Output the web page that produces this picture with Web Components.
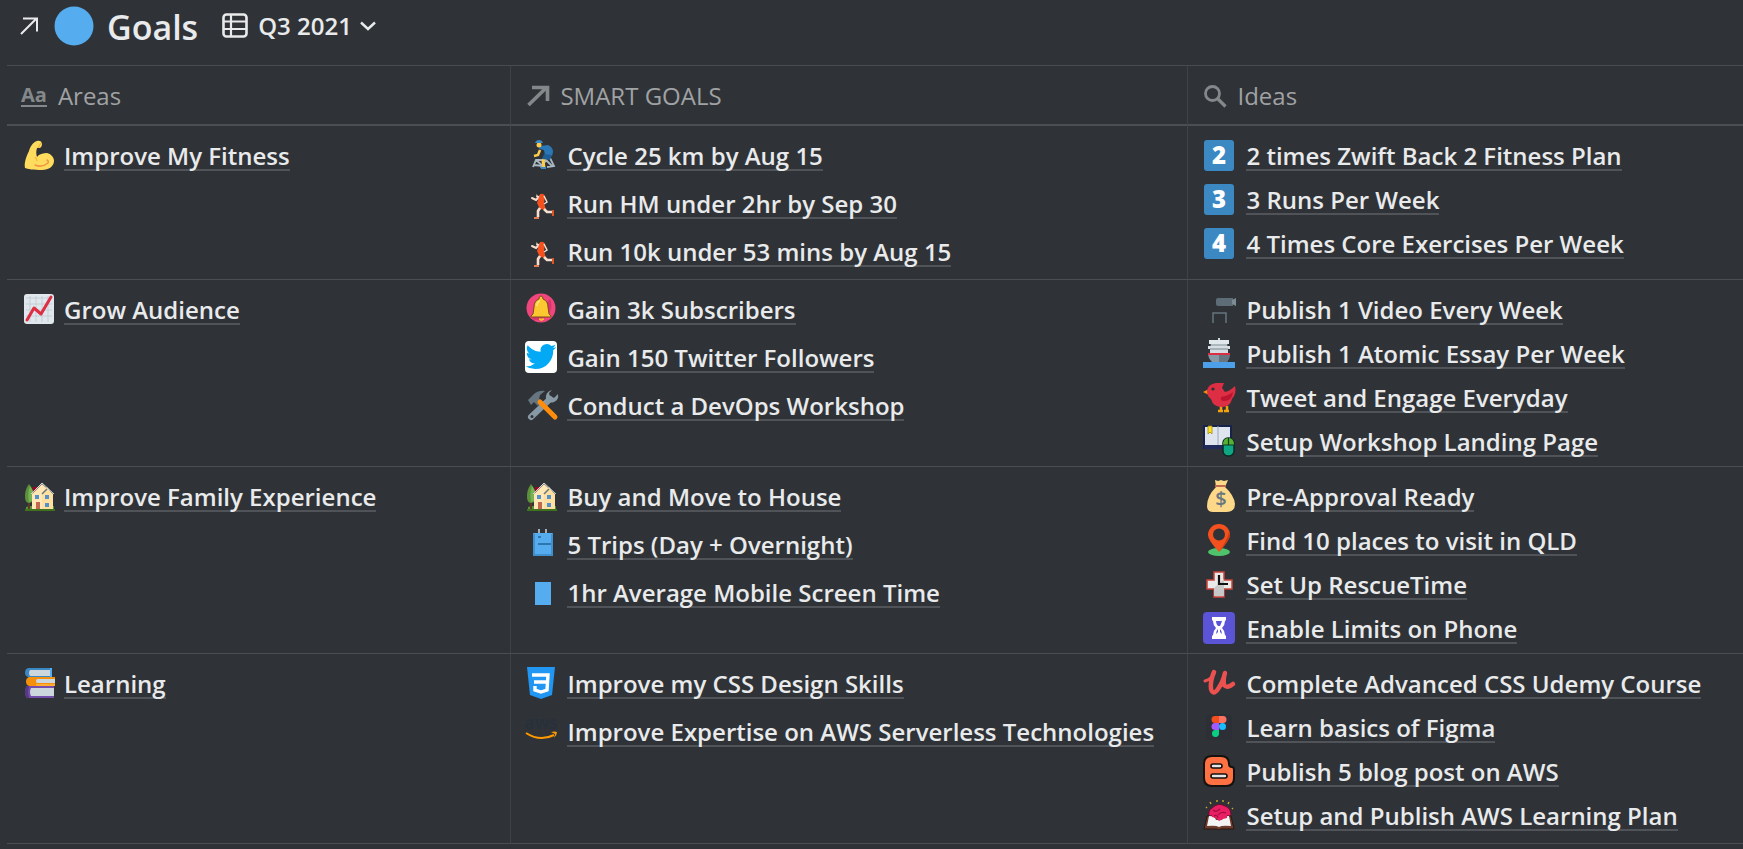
<!DOCTYPE html>
<html lang="en">
<head>
<meta charset="utf-8">
<title>Goals – Q3 2021</title>
<style>
  html, body { margin: 0; min-height: 100%; background: #2f3337; }
  body { font-family: "Open Sans", "Noto Sans", sans-serif; font-size: 24px; color: #e9eaeb; overflow-x: hidden; }
</style>
</head>
<body>
<goals-page></goals-page>

<script>
const HOUSE = `
  <path d="M2 29h30v2H2z" fill="#3e721d"/><path d="M3 27q6-2 12 0t16-1v3H3z" fill="#5c913b"/>
  <rect x="5" y="20" width="2" height="9" fill="#5b3a22"/>
  <path d="M6 4c-3 4-4 8-4 12s1 7 4 7 5-3 5-7-2-8-5-12z" fill="#5c913b"/><path d="M7 6c-2 5-2 10-1 16 3 0 5-3 5-6 0-4-2-7-4-10z" fill="#77b255"/>
  <rect x="10" y="7" width="4" height="6" fill="#a0041e"/>
  <path d="M9 14l10-10 11 10v15H9z" fill="#ffe8b6"/><path d="M19 12l5-5 6 8v14H19z" fill="#ffe0a0"/>
  <path d="M8 14L19 3l12 11" fill="none" stroke="#ccd6dd" stroke-width="1"/><path d="M19 14l5-5" stroke="#66757f" stroke-width="1.5"/>
  <rect x="12" y="15" width="4" height="4" fill="#5592c9"/><rect x="22" y="15" width="4" height="4" fill="#5592c9"/><rect x="22" y="23" width="4" height="4" fill="#5592c9"/><rect x="13" y="22" width="4" height="7" fill="#c1694f"/>`;
const RUNNER = `
  <g transform="translate(0 2)"><path d="M12 4l4 1-1 5-4-2z" fill="#f5dccb"/><path d="M11 4l5-1 1 3-4 1z" fill="#292f33"/>
  <path d="M14 8l-3 3-4-2" fill="none" stroke="#f7dece" stroke-width="2" stroke-linecap="round"/>
  <path d="M15 5q4-1 5 2l-1 7 2 7-6-1-3-6z" fill="#f4511e"/><path d="M19 7l3 6-3 2" fill="none" stroke="#f7dece" stroke-width="1.500"/>
  <path d="M15 19l-2 3v6" fill="none" stroke="#f7dece" stroke-width="2.600"/><path d="M19 20l3 3h5" fill="none" stroke="#f7dece" stroke-width="2.600"/>
  <path d="M9 29h5" stroke="#e57b52" stroke-width="2"/><path d="M28 21v6" stroke="#dd551f" stroke-width="2"/></g>`;
const keycap = n => `
  <rect x="1" y="1" width="30" height="31" rx="3" fill="#3b88c3"/>
  <text x="16" y="25" text-anchor="middle" font-family="Open Sans" font-size="24" font-weight="800" fill="#fff">${n}</text>`;

const ICONS = {
  arm: `<path d="M14 2c2-1 5 0 5 3 0 2-1 4-3 4h-2c-1 3-1 6 0 9 2-3 6-4 10-4 4 1 7 4 7 8 0 5-5 9-12 9-8 0-15-1-17-2-1-5 1-11 4-17 1-4 4-9 8-10z" fill="#ffdc5d"/><path d="M15 9l3-5M12 18q2 2 2 4" stroke="#f2ab3a" stroke-width="1" fill="none"/><path d="M12 26q7 3 13-2 1-2-1-3" fill="none" stroke="#ef9645" stroke-width="1.5" stroke-linecap="round"/>`,
  chart: `<rect x="1" y="1" width="30" height="30" rx="3" fill="#e1e8ed"/><path d="M3 5h26M3 11h26M3 17h26M3 23h26M7 3v26M13 3v26M19 3v26M25 3v26" stroke="#c3ced6" stroke-width="1"/><path d="M4 27l7-12 7 6L28 4" fill="none" stroke="#dd2e44" stroke-width="3" stroke-linecap="round" stroke-linejoin="round"/>`,
  house: HOUSE,
  books: `<path d="M5 1h24v9H5q-3-1-3-4.500T5 1z" fill="#3b88c3"/><path d="M7 3h20v6H7q-2-3 0-6z" fill="#ccd6dd"/><path d="M27 1h2v9h-2z" fill="#55acee"/><path d="M6 10h26v9H6q-3-1-3-4.500T6 10z" fill="#f4900c"/><path d="M14 12h18v4H14q-2-2 0-4z" fill="#ccd6dd"/><path d="M13 17h19v2H13z" fill="#ffac33"/><path d="M5 19h26v12H5q-3-1-3-6t3-6z" fill="#744eaa"/><path d="M8 21h23v8H8q-2-4 0-8z" fill="#ccd6dd"/><path d="M5 19q-3 6 0 12" fill="none" stroke="#553986" stroke-width="3"/>`,
  cyclist: `<path d="M8 28l3-7h10l6 6M11 21l7 6-9-1M21 21l-5 8M25 19l4 8-7 1" fill="none" stroke="#aab8c2" stroke-width="1.800"/><path d="M15 7l8-1q5 2 5 7l-1 4-7-1-1-5-5-1z" fill="#2a77b8"/><path d="M15 11l-2 5-4 1" fill="none" stroke="#ffcc4d" stroke-width="2.500"/><path d="M21 17l-3 5 1 6" fill="none" stroke="#ffcc4d" stroke-width="3"/><path d="M19 15l8 1-2 5-8-1z" fill="#1f5f95"/><path d="M16 29h5" stroke="#3b88c3" stroke-width="2"/><circle cx="14" cy="6" r="2.500" fill="#ffcc4d"/><path d="M10 4q1-3 4-3t4 3z" fill="#3b88c3"/>`,
  runner: RUNNER,
  bell: `<circle cx="16" cy="15" r="14.500" fill="#f0457d"/><path d="M25 6a14.500 14.500 0 0 1-18 20" fill="#d93370"/><path d="M14 6q0-3 2-3t2 3q5 2 5 8l1 7 2 2v1H6v-1l2-2 1-7q0-6 5-8z" fill="#fbc82f" stroke="#7c4a1b" stroke-width="1"/><path d="M14 26q2 3 5 0z" fill="#d9a11c" stroke="#fbc82f"/><path d="M12 13q0-4 3-5" stroke="#ffe58a" stroke-width="1.500" fill="none"/>`,
  twitter: `<rect width="32" height="32" rx="4" fill="#fff"/><path transform="translate(.6 .2) scale(1.28)" fill="#03a9f4" d="M23.950 4.570a10 10 0 0 1-2.820.780 4.960 4.960 0 0 0 2.160-2.730c-.950.560-2 .960-3.130 1.190a4.920 4.920 0 0 0-8.380 4.480C7.690 8.090 4.070 6.130 1.640 3.160a4.820 4.820 0 0 0-.670 2.480c0 1.710.870 3.210 2.190 4.100a4.900 4.900 0 0 1-2.230-.620v.060a4.920 4.920 0 0 0 3.950 4.830 5 5 0 0 1-2.210.080 4.940 4.940 0 0 0 4.600 3.420A9.870 9.870 0 0 1 0 19.540a13.990 13.990 0 0 0 7.560 2.210c9.050 0 14-7.500 14-13.980 0-.210 0-.420-.020-.630a9.940 9.940 0 0 0 2.410-2.570z"/>`,
  tools: `<g transform="translate(1 1)"><path d="M5 27L24 9" stroke="#8899a6" stroke-width="6" stroke-linecap="round"/><circle cx="6" cy="26.500" r="1.500" fill="#2f3337"/><path d="M26 0q-7 2-6 9 3 5 8 3 5-2 4-8l-4 4-4-2-1-3z" fill="#8899a6"/><path d="M2 10l5-5q5-5 12-4l-5 4-1 4 3 3-4 4-4-4-3 3z" fill="#66757f"/><path d="M14 12L29 27" stroke="#ff8c0a" stroke-width="5" stroke-linecap="round"/></g>`,
  backpack: `<path d="M14 1v7M21 1v7" stroke="#ccd6dd" stroke-width="1.500"/><rect x="8" y="5" width="20" height="23" rx="1" fill="#55acee"/><path d="M13 9h3M13 16h13" stroke="#226699" stroke-width="1.500"/><path d="M9 6v21h18V6" fill="none" stroke="#3b88c3" stroke-width="1.500"/>`,
  phone: `<rect x="10" y="6" width="16" height="23" fill="#55acee"/>`,
  two: keycap(2), three: keycap(3), four: keycap(4),
  camera: `<g transform="translate(0 3)"><path d="M13 4q0-2 2-2h15v8H15q-2 0-2-2z" fill="#5d6c76"/><path d="M29 4l4-2v8l-4-2z" fill="#7d8b95"/><path d="M10 27V17h13v10" fill="none" stroke="#66757f" stroke-width="1.500"/></g>`,
  ship: `<path d="M16 1v6M10 5h12" stroke="#ccd6dd" stroke-width="2"/><path d="M6 3h20v4H6zM8 7h16v4H8z" fill="#e1e8ed"/><path d="M5 9h22v3H5zM7 12h18v4H7z" fill="#d5dde3"/><path d="M7 8h18M7 12h18" stroke="#77868f" stroke-width="1"/><path d="M5 16h22q0 5-3 9H9q-4-4-4-9z" fill="#8899a6"/><path d="M16 16h11q0 5-3 9h-8z" fill="#66757f"/><path d="M5 16h22v2H5z" fill="#dd2e44"/><path d="M0 25h32v6H0z" fill="#4c9fe8"/>`,
  bird: `<g transform="translate(0 1)"><path d="M6 7L0 10l6 3z" fill="#f4900c"/><path d="M18 24v4m-3 1h5M24 24v4m-3 1h5" stroke="#f4a30c" stroke-width="2.500"/><path d="M4 9Q5 2 13 1h8l-2 5 3 4q5-1 10-6 2 7-3 13-2 8-10 8-9 0-11-8-4-3-4-8z" fill="#dd2e44"/><path d="M18 15q7-1 12-5-1 9-9 9-4 0-3-4z" fill="#bd1430"/><circle cx="10" cy="7" r="1.600" fill="#292f33"/></g>`,
  landing: `<path d="M1 1h27v22H1z" fill="#dfe5ef" stroke="#17234b" stroke-width="2"/><path d="M15 1v22" stroke="#9aa4bd" stroke-width="1"/><path d="M1 20h19v4H1z" fill="#202a5c"/><path d="M5 1h4v8l-2-2-2 2z" fill="#ffe02b" stroke="#a58b00" stroke-width=".8"/><rect x="20" y="13" width="11" height="18" rx="5" fill="#0fa683" stroke="#0c2a24" stroke-width="1.500"/><path d="M20 20q0-7 5.500-7t5.500 7z" fill="#57b030"/><path d="M20 20h11M25.500 13v7" stroke="#0c3a24" stroke-width="1.200"/>`,
  money: `<path d="M12 0l3 1 3-1 3 1 4-1-3 7q9 8 10 17 0 8-9 8H10q-6 0-6-6 0-10 9-19z" fill="#fdd888"/><path d="M12 6h11" stroke="#bf6952" stroke-width="2"/><text x="18" y="26" text-anchor="middle" font-family="Open Sans" font-size="20" font-weight="600" fill="#67757f">$</text>`,
  pin: `<ellipse cx="16" cy="28" rx="11" ry="4" fill="#4fc36b"/><path d="M16 28Q5 16 5 11a11 11 0 0 1 22 0Q27 16 16 28z" fill="#f4511e"/><path d="M16 28Q25 15 26 8l1 3q-1 6-11 17z" fill="#c83a13"/><circle cx="16" cy="10.500" r="6" fill="#2f3337"/>`,
  rescue: `<path d="M11 4h10v8h8v9h-8v8H11v-8H4v-9h7z" fill="#e9e9e9" stroke="#c9443d" stroke-width="1.500"/><path d="M11 20l10-9v17H11z" fill="#c8c8c8"/><path d="M16 7v9h9" fill="none" stroke="#111" stroke-width="2.200"/>`,
  hourglass: `<rect width="32" height="32" rx="4" fill="#5b54d6"/><path d="M9 5h14v3l-1 1q0 4-3 7 3 3 3 7l1 1v3H9v-3l1-1q0-4 3-7-3-3-3-7L9 8z" fill="#fff"/><path d="M13 9h6q-1 3-2 5v3q2 2 2 5h-6q0-3 2-5v-3q-2-2-2-5z" fill="#5b54d6"/><path d="M15 14h2v6l2 2h-6l2-2z" fill="#fff"/>`,
  css: `<path d="M2 0h28l-3 28-11 4-11-4z" fill="#2196f3"/><path d="M7 8h16l-1 15-6 2-6-2v-4M9 15h13" fill="none" stroke="#fff" stroke-width="3.400"/>`,
  aws: `<text x="16" y="14" text-anchor="middle" font-family="Open Sans" font-size="17" font-weight="700" fill="#28303b">aws</text><path d="M1 18q14 9 28 2" fill="none" stroke="#f90" stroke-width="2"/><path d="M26 17q4-1 6 0 0 3-3 6 1-3 1-4z" fill="#f90"/>`,
  udemy: `<path d="M2 14q7-2 9-8" fill="none" stroke="#eb524f" stroke-width="3" stroke-linecap="round"/><path d="M11 5Q7 14 8 22q2 7 7 0Q20 15 22 6q-2 7-1 12 3 4 9-1" fill="none" stroke="#eb524f" stroke-width="4.500" stroke-linecap="round" stroke-linejoin="round"/>`,
  figma: `<rect x="3" y="3" width="26" height="26" rx="4" fill="#2c2f35"/><path d="M12 5h4v7h-4a3.500 3.500 0 0 1 0-7z" fill="#f24e1e"/><path d="M16 5h4a3.500 3.500 0 0 1 0 7h-4z" fill="#ff7262"/><path d="M16 12h-4a3.500 3.500 0 0 0 0 7h4z" fill="#a259ff"/><circle cx="19.500" cy="15.500" r="3.500" fill="#1abcfe"/><path d="M12 19h4v3.500a3.500 3.500 0 1 1-4-3.500z" fill="#0acf83"/>`,
  blogger: `<path d="M9 1h9q8 0 8 8 0 3 3 3 2 0 2 3v8q0 8-8 8H9q-8 0-8-8V9q0-8 8-8z" fill="#ff7143" stroke="#15110f" stroke-width="2"/><rect x="8" y="9" width="11" height="4" rx="2" fill="#e6e6e6" stroke="#15110f" stroke-width="1.600"/><rect x="8" y="19" width="16" height="4" rx="2" fill="#e6e6e6" stroke="#15110f" stroke-width="1.600"/>`,
  brain: `<path d="M4 9l-1-1M8 5L7 3M14 3V1M20 3V1M25 5l1-2M29 10l1-1" stroke="#c8a92e" stroke-width="1.400"/><path d="M6 17q-1-6 3-8 6-6 13-2 6 2 6 9l-3 6H9z" fill="#e91e63" stroke="#6e0c30" stroke-width="1"/><path d="M4 17l-3 13h13l2 1 2-1h13l-3-13z" fill="#6d3c2c" stroke="#2b1712" stroke-width="1"/><path d="M6 17q6 0 7 4h3v7q-3-2-12-1zM26 17q-6 0-7 4h-3v7q3-2 12-1z" fill="#f4f4f4"/><path d="M9 14h15v5l-4 1-4 2-3-3-4-1z" fill="#e91e63"/><path d="M10 11q3 3 7-1m-2 6q3-4 8-2m-12 3q3-2 4 2" fill="none" stroke="#a30f43" stroke-width="1.200"/>`,
  table: `<rect x="1.500" y="1.500" width="23" height="22" rx="3" fill="none" stroke="currentColor" stroke-width="2.600"/><path d="M9 2v21M2 8.500h22M2 16h22" stroke="currentColor" stroke-width="2.200"/>`,
  chevron: `<path d="M1 1.500l7 6.500 7-6.500" fill="none" stroke="currentColor" stroke-width="2.400"/>`,
  open: `<path d="M1 17L16 2M3 1.500h14v13" fill="none" stroke="currentColor" stroke-width="2"/>`,
  relation: `<path d="M1.500 20L19 3M5 2.500h15.500V16" fill="none" stroke="currentColor" stroke-width="3.600"/>`,
  search: `<circle cx="8.500" cy="8.500" r="7" fill="none" stroke="currentColor" stroke-width="2.800"/><path d="M13.500 13.500l8 8" stroke="currentColor" stroke-width="3.200"/>`,
  dot: `<circle cx="20" cy="20" r="19.500" fill="#55acee"/>`
};
const SIZES = { table: [26, 25], chevron: [16, 10], open: [18, 18], relation: [22, 22], search: [22, 22], dot: [40, 40] };

class GoalIcon extends HTMLElement {
  connectedCallback() {
    if (this.shadowRoot) return;
    const name = this.getAttribute('name');
    const [w, h] = SIZES[name] || [32, 32];
    this.attachShadow({ mode: 'open' }).innerHTML = `
      <style>:host { display: block; flex: none; } svg { display: block; overflow: visible; }</style>
      <svg width="${w}" height="${h}" viewBox="0 0 ${w} ${h}" aria-hidden="true">${ICONS[name]}</svg>`;
  }
}
customElements.define('goal-icon', GoalIcon);

class PageLink extends HTMLElement {
  connectedCallback() {
    if (this.shadowRoot) return;
    this.attachShadow({ mode: 'open' }).innerHTML = `
      <style>
        :host { display: flex; align-items: center; height: 34px; gap: var(--icon-gap, 10px); }
        a { padding-top: 4px; border-bottom: 2px solid #505357; line-height: 26px; font-weight: 600; color: inherit; text-decoration: none; white-space: nowrap; }
      </style>
      <goal-icon name="${this.getAttribute('icon')}"></goal-icon>
      <a href="#"><slot></slot></a>`;
  }
}
customElements.define('page-link', PageLink);

class LinkList extends HTMLElement {
  connectedCallback() {
    if (this.shadowRoot) return;
    this.attachShadow({ mode: 'open' }).innerHTML = `
      <style>:host { display: flex; flex-direction: column; gap: var(--list-gap, 14px); }</style>
      <slot></slot>`;
  }
}
customElements.define('link-list', LinkList);

class ColumnTitle extends HTMLElement {
  connectedCallback() {
    if (this.shadowRoot) return;
    this.attachShadow({ mode: 'open' }).innerHTML = `
      <style>:host { display: flex; align-items: center; gap: 11px; font-weight: 400; line-height: 32px; color: #a0a2a4; }
      ::slotted([slot=icon]) { color: #85888b; }</style>
      <slot name="icon"></slot><slot></slot>`;
  }
}
customElements.define('column-title', ColumnTitle);

class ViewHeader extends HTMLElement {
  connectedCallback() {
    if (this.shadowRoot) return;
    this.attachShadow({ mode: 'open' }).innerHTML = `
      <style>
        :host { display: flex; align-items: center; height: 51px; padding: 0 0 14px 20px; }
        a { color: inherit; margin-right: 16px; }
        h1 { margin: 0 24px 0 13px; font-size: 34px; line-height: 40px; font-weight: 600; padding-top: 3px; }
        button { display: flex; align-items: center; gap: 10px; padding: 0; border: 0; background: none; color: inherit; font: 600 24px/32px "Open Sans", "Noto Sans", sans-serif; }
        goal-icon[name=chevron] { margin-left: -2px; }
      </style>
      <a href="#" aria-label="Open as page"><goal-icon name="open"></goal-icon></a>
      <goal-icon name="dot"></goal-icon>
      <h1><slot></slot></h1>
      <button type="button"><goal-icon name="table"></goal-icon><slot name="view"></slot><goal-icon name="chevron"></goal-icon></button>`;
  }
}
customElements.define('view-header', ViewHeader);

const ROWS = [
  [[['arm', 'Improve My Fitness']],
   [['cyclist', 'Cycle 25 km by Aug 15'], ['runner', 'Run HM under 2hr by Sep 30'], ['runner', 'Run 10k under 53 mins by Aug 15']],
   [['two', '2 times Zwift Back 2 Fitness Plan'], ['three', '3 Runs Per Week'], ['four', '4 Times Core Exercises Per Week']]],
  [[['chart', 'Grow Audience']],
   [['bell', 'Gain 3k Subscribers'], ['twitter', 'Gain 150 Twitter Followers'], ['tools', 'Conduct a DevOps Workshop']],
   [['camera', 'Publish 1 Video Every Week'], ['ship', 'Publish 1 Atomic Essay Per Week'], ['bird', 'Tweet and Engage Everyday'], ['landing', 'Setup Workshop Landing Page']]],
  [[['house', 'Improve Family Experience']],
   [['house', 'Buy and Move to House'], ['backpack', '5 Trips (Day + Overnight)'], ['phone', '1hr Average Mobile Screen Time']],
   [['money', 'Pre-Approval Ready'], ['pin', 'Find 10 places to visit in QLD'], ['rescue', 'Set Up RescueTime'], ['hourglass', 'Enable Limits on Phone']]],
  [[['books', 'Learning']],
   [['css', 'Improve my CSS Design Skills'], ['aws', 'Improve Expertise on AWS Serverless Technologies']],
   [['udemy', 'Complete Advanced CSS Udemy Course'], ['figma', 'Learn basics of Figma'], ['blogger', 'Publish 5 blog post on AWS'], ['brain', 'Setup and Publish AWS Learning Plan']]]
];

class GoalsTable extends HTMLElement {
  connectedCallback() {
    if (this.shadowRoot) return;
    const cell = links => `<td><link-list>${links.map(([i, t]) => `<page-link icon="${i}">${t}</page-link>`).join('')}</link-list></td>`;
    this.attachShadow({ mode: 'open' }).innerHTML = `
      <style>
        :host { display: block; padding-left: 7px; }
        table { width: 100%; table-layout: fixed; border-spacing: 0; border-top: 1px solid #484b4f; }
        .areas { width: 29%; } .goals { width: 39%; }
        th { padding: 14px 14px 12px; text-align: left; border-bottom: 2px solid #4b4e52; }
        th + th { padding-left: 16px; }
        td { vertical-align: top; padding: 12px 14px 11px; border-bottom: 1px solid #4b4e52; }
        th + th, td + td { border-left: 1px solid #3f4347; }
        td:first-child { padding-left: 16px; --icon-gap: 9px; }
        td:last-child { padding: 12px 15px 8px; --icon-gap: 11px; --list-gap: 10px; }
        tr:last-child td:last-child { padding-bottom: 11px; }
        .aa { font-size: 20px; line-height: 20px; font-weight: 700; border-bottom: 2px solid; }
      </style>
      <table>
        <colgroup><col class="areas"><col class="goals"><col></colgroup>
        <thead><tr>
          <th scope="col"><column-title><span slot="icon" class="aa">Aa</span>Areas</column-title></th>
          <th scope="col"><column-title><goal-icon slot="icon" name="relation"></goal-icon>SMART GOALS</column-title></th>
          <th scope="col"><column-title><goal-icon slot="icon" name="search"></goal-icon>Ideas</column-title></th>
        </tr></thead>
        <tbody>${ROWS.map(r => `<tr>${r.map(cell).join('')}</tr>`).join('')}</tbody>
      </table>`;
  }
}
customElements.define('goals-table', GoalsTable);

class GoalsPage extends HTMLElement {
  connectedCallback() {
    if (this.shadowRoot) return;
    this.attachShadow({ mode: 'open' }).innerHTML = `
      <style>:host { display: block; }</style>
      <view-header>Goals<span slot="view">Q3 2021</span></view-header>
      <goals-table></goals-table>`;
  }
}
customElements.define('goals-page', GoalsPage);
</script>
</body>
</html>
